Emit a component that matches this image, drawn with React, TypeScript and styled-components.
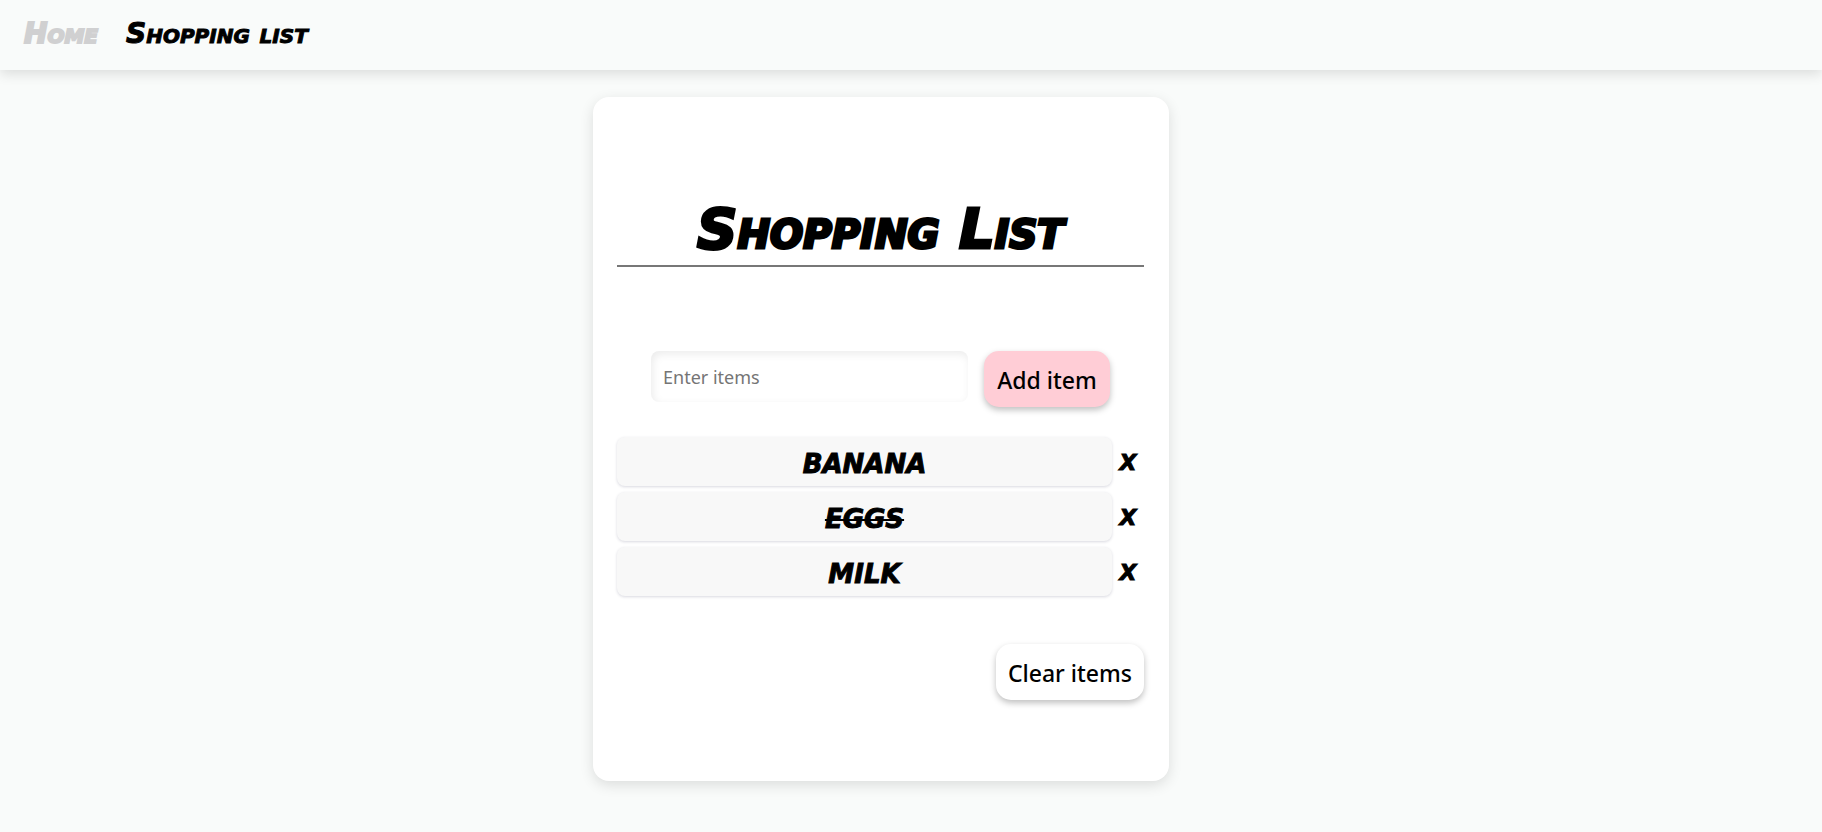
import React, { useState } from "react";
import styled, { createGlobalStyle } from "styled-components";

const marker = `"Permanent Marker", "DejaVu Sans", sans-serif`;
const ui = `"Segoe UI", "Noto Sans", sans-serif`;

const GlobalStyle = createGlobalStyle`
  * { box-sizing: border-box; }
  body { margin: 0; background: #f9fbfa; color: #000; font-family: ${ui}; }
`;

const Page = styled.div`
  min-height: 100vh;
  padding-bottom: 48px;
`;

const NavBar = styled.nav`
  display: flex;
  align-items: center;
  gap: 28px;
  height: 70px;
  padding: 0 24px 2px;
  box-shadow: 0 4px 12px rgba(0, 0, 0, 0.12);
`;

const NavLink = styled.a<{ $muted?: boolean }>`
  font: italic bold 28px/32px ${marker};
  font-variant: small-caps;
  text-decoration: none;
  color: ${(p) => (p.$muted ? "#d0d0d1" : "#000")};
  -webkit-text-stroke: ${(p) => (p.$muted ? "2px #d0d0d1" : "1px #000")};
`;

const Main = styled.main`
  display: flex;
  justify-content: center;
  padding: 27px 60px 0 0;
`;

const Card = styled.section`
  width: 576px;
  max-width: 100%;
  padding: 96px 25px 81px 24px;
  border-radius: 16px;
  background: #fff;
  box-shadow: 0 4px 14px rgba(0, 0, 0, 0.12);
`;

const Title = styled.h1`
  margin: 0;
  padding-top: 2px;
  padding-bottom: 2px;
  border-bottom: 2px solid #777;
  text-align: center;
  font: italic bold 56px/68px ${marker};
  font-variant: small-caps;
  -webkit-text-stroke: 3px #000;
`;

const Form = styled.form`
  display: flex;
  justify-content: center;
  align-items: flex-start;
  gap: 16px;
  padding: 84px 0 30px;
`;

const TextBox = styled.input`
  width: 317px;
  min-width: 0;
  height: 51px;
  padding: 2px 12px;
  border: 0;
  border-radius: 8px;
  background: #fff;
  box-shadow: inset 2px 3px 8px rgba(0, 0, 0, 0.08);
  font: 18px/28px ${ui};
  &::placeholder { color: #757575; opacity: 1; }
`;

const Button = styled.button<{ $pink?: boolean }>`
  height: 56px;
  min-width: 126px;
  padding: 2px 12px 0;
  border: 0;
  border-radius: 15px;
  background: ${(p) => (p.$pink ? "#ffcdd6" : "#fff")};
  color: #000;
  box-shadow: 0 3px 6px rgba(0, 0, 0, 0.25);
  white-space: nowrap;
  font: 500 23px/32px ${ui};
`;

const List = styled.ul`
  display: flex;
  flex-direction: column;
  gap: 6px;
  margin: 0;
  padding: 0;
  list-style: none;
`;

const Row = styled.li`
  display: flex;
  align-items: center;
`;

const Item = styled.button<{ $done: boolean }>`
  flex: 1;
  height: 49px;
  padding: 4px 0 0;
  border: 0;
  border-radius: 8px;
  background: #f8f8f8;
  color: #000;
  box-shadow: 0 1px 3px rgba(20, 20, 60, 0.16);
  font: italic bold 26px/32px ${marker};
  -webkit-text-stroke: 1px #000;
  text-decoration: ${(p) => (p.$done ? "line-through 2px" : "none")};
`;

const Remove = styled.button`
  width: 32px;
  padding: 2px 0 0;
  border: 0;
  background: none;
  color: #000;
  font: italic bold 22px/32px ${marker};
  -webkit-text-stroke: 1px #000;
`;

const Footer = styled.div`
  display: flex;
  justify-content: flex-end;
  padding-top: 48px;
`;

const items = [
  { name: "BANANA", done: false },
  { name: "EGGS", done: true },
  { name: "MILK", done: false },
];

export default function App() {
  const [list, setList] = useState(items);
  const [text, setText] = useState("");

  const add = (e: React.FormEvent) => {
    e.preventDefault();
    if (!text.trim()) return;
    setList([...list, { name: text.trim().toUpperCase(), done: false }]);
    setText("");
  };
  const toggle = (i: number) =>
    setList(list.map((it, n) => (n === i ? { ...it, done: !it.done } : it)));

  return (
    <Page>
      <GlobalStyle />
      <NavBar>
        <NavLink href="#home" $muted>Home</NavLink>
        <NavLink href="#list">Shopping list</NavLink>
      </NavBar>
      <Main>
        <Card>
          <Title>Shopping List</Title>
          <Form onSubmit={add}>
            <TextBox
              aria-label="Enter items"
              placeholder="Enter items"
              value={text}
              onChange={(e) => setText(e.target.value)}
            />
            <Button type="submit" $pink>Add item</Button>
          </Form>
          <List>
            {list.map((it, i) => (
              <Row key={i}>
                <Item type="button" $done={it.done} onClick={() => toggle(i)}>{it.name}</Item>
                <Remove
                  type="button"
                  aria-label={`Remove ${it.name}`}
                  onClick={() => setList(list.filter((_, n) => n !== i))}
                >
                  X
                </Remove>
              </Row>
            ))}
          </List>
          <Footer>
            <Button type="button" onClick={() => setList([])}>Clear items</Button>
          </Footer>
        </Card>
      </Main>
    </Page>
  );
}
